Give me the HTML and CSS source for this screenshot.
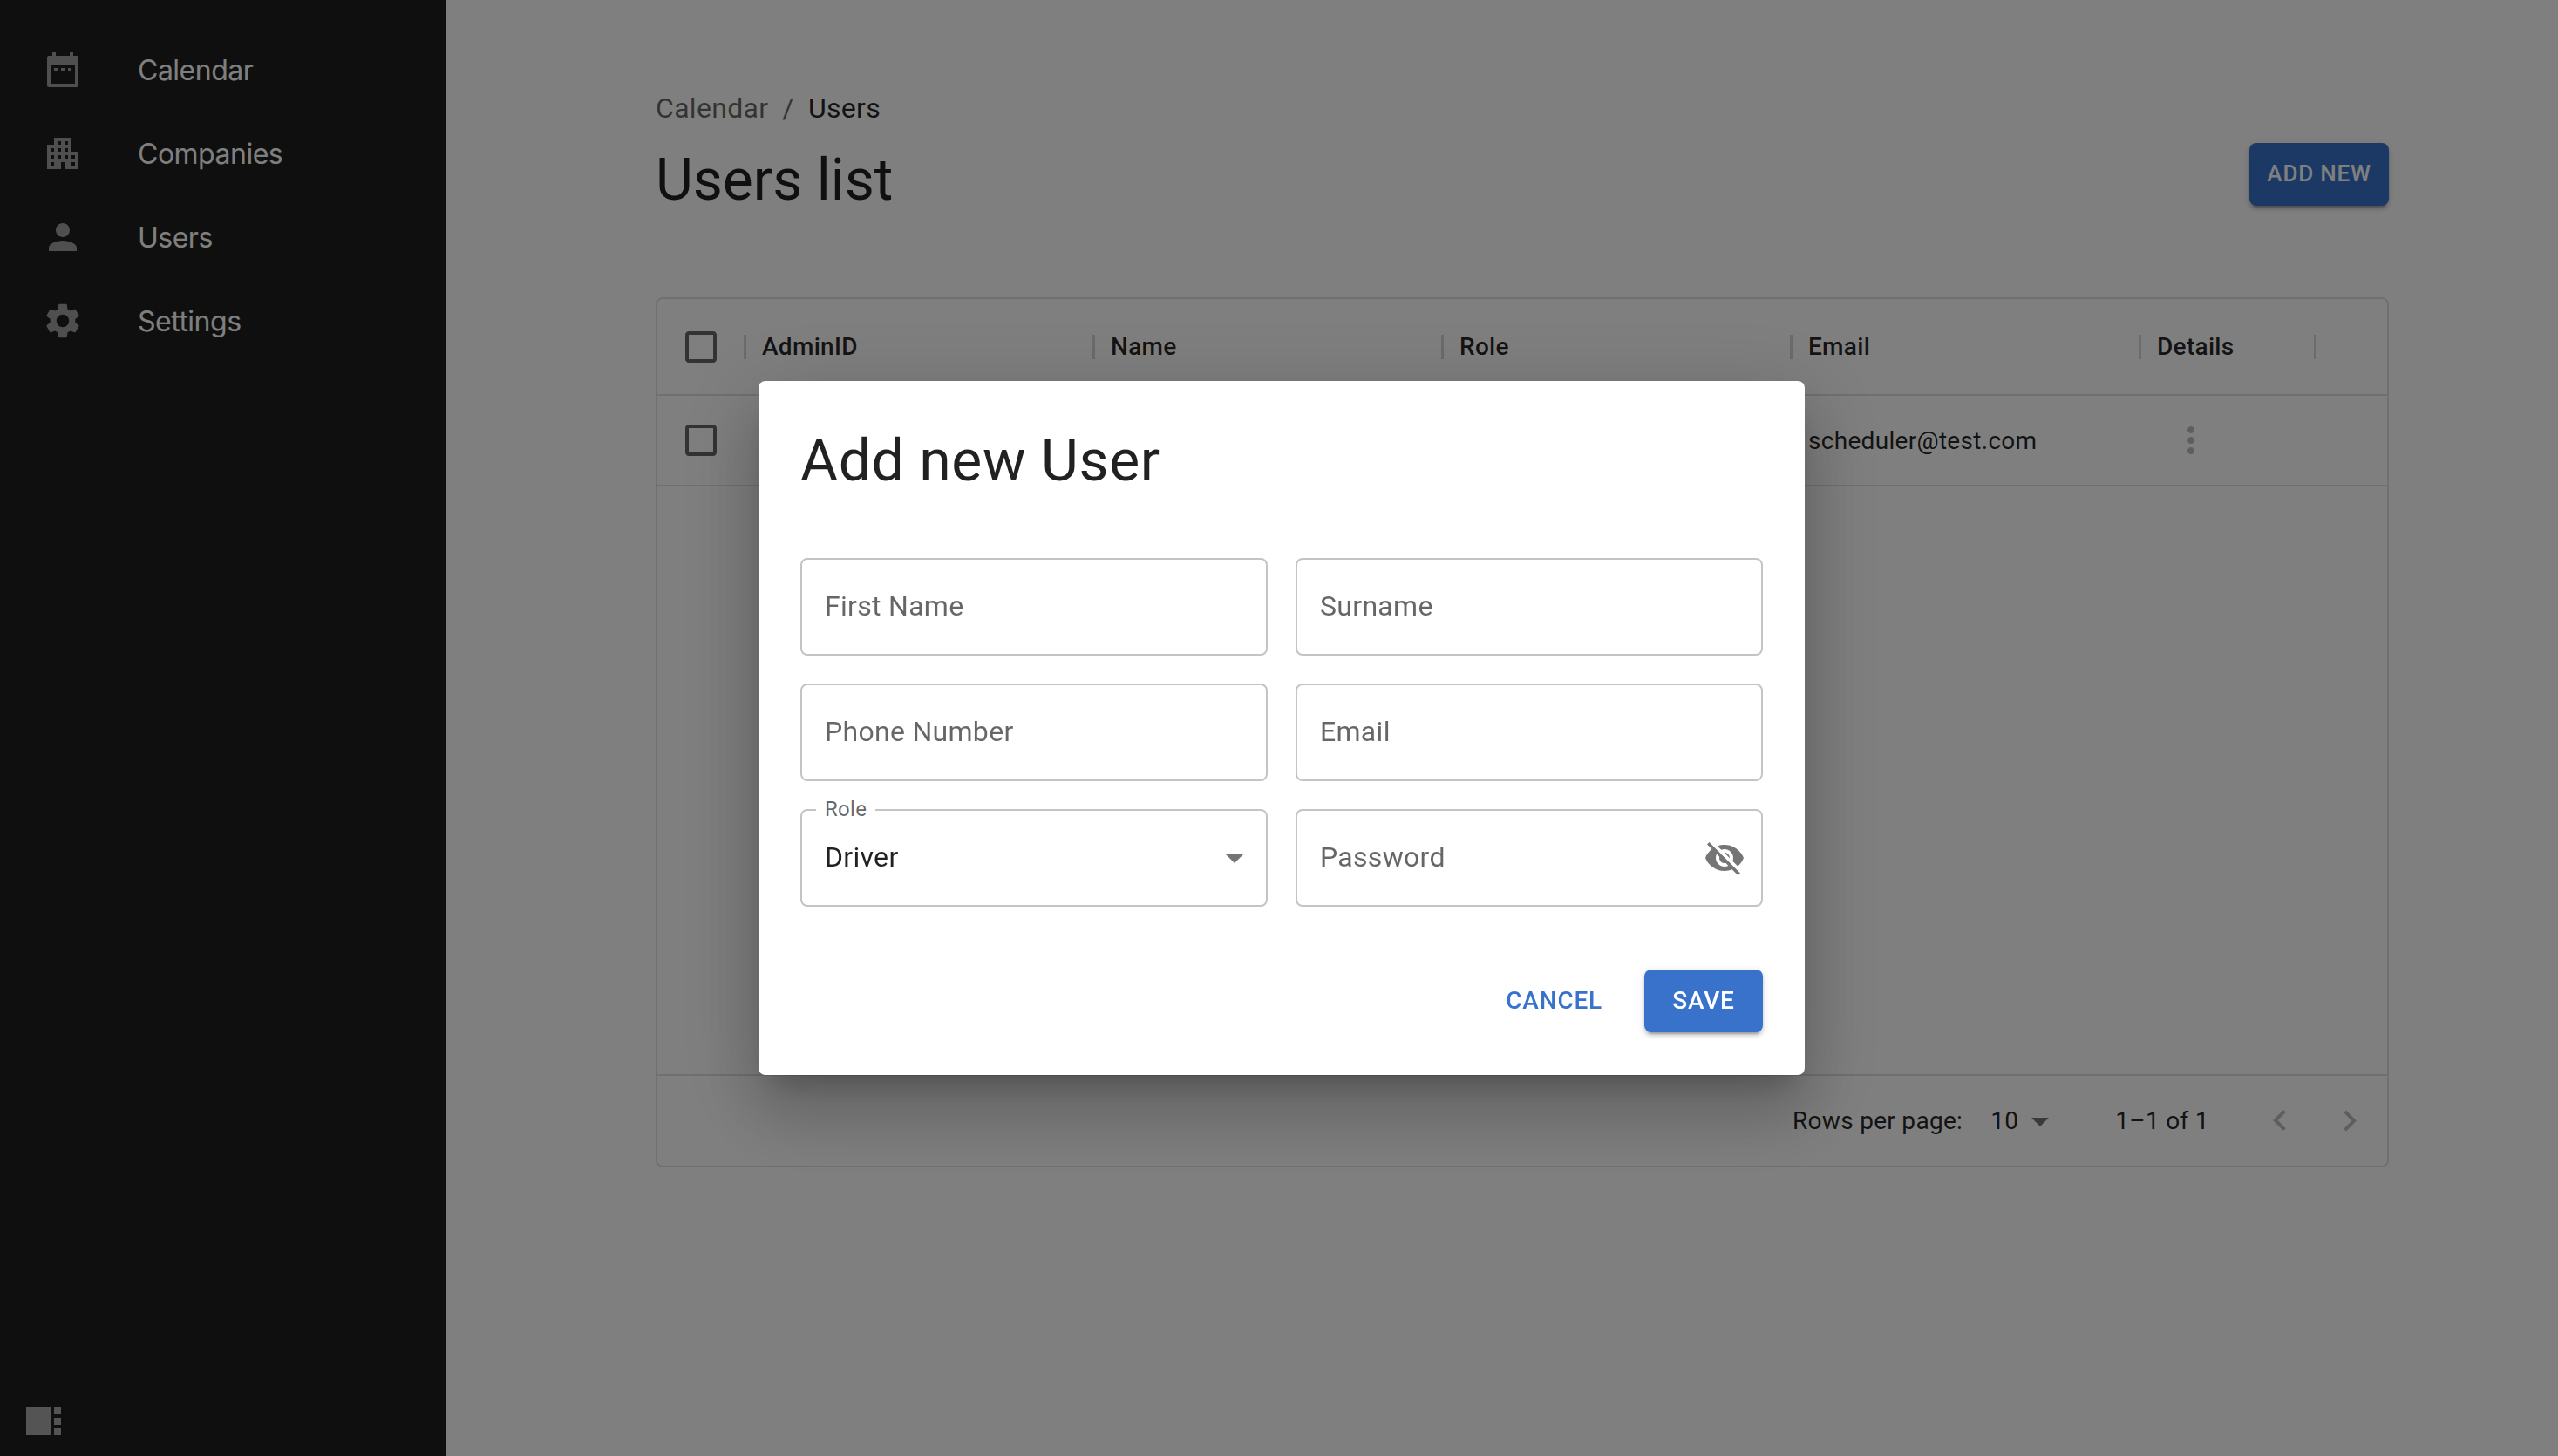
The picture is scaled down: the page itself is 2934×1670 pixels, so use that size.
FILE: index.html
```html
<!DOCTYPE html>
<html lang="en">
<head>
  <meta charset="UTF-8" />
  <title>Users list</title>
  <link rel="stylesheet" href="styles.css">
</head>
<body>

  <div class="page">
    <!-- Sidebar -->
    <aside class="sidebar">
      <nav class="nav">
        <a class="nav-item">
          <svg class="icon" viewBox="0 0 24 24"><path fill-rule="evenodd" d="M6 2h2v2h8V2h2v2h2c.6 0 1 .4 1 1v16c0 .6-.4 1-1 1H4c-.6 0-1-.4-1-1V5c0-.6.4-1 1-1h2V2zM5 9v11h14V9H5zm2 2h2v2H7v-2zm4 0h2v2h-2v-2zm4 0h2v2h-2v-2z"/></svg>
          <span>Calendar</span>
        </a>
        <a class="nav-item">
          <svg class="icon" viewBox="0 0 24 24"><path d="M17 11V3H7v4H3v14h8v-4h2v4h8V11h-4zM7 19H5v-2h2v2zm0-4H5v-2h2v2zm0-4H5V9h2v2zm4 4H9v-2h2v2zm0-4H9V9h2v2zm0-4H9V5h2v2zm4 8h-2v-2h2v2zm0-4h-2V9h2v2zm0-4h-2V5h2v2zm4 12h-2v-2h2v2zm0-4h-2v-2h2v2z"/></svg>
          <span>Companies</span>
        </a>
        <a class="nav-item">
          <svg class="icon" viewBox="0 0 24 24"><path d="M12 12c2.21 0 4-1.79 4-4s-1.79-4-4-4-4 1.79-4 4 1.79 4 4 4zm0 2c-2.67 0-8 1.34-8 4v2h16v-2c0-2.66-5.33-4-8-4z"/></svg>
          <span>Users</span>
        </a>
        <a class="nav-item">
          <svg class="icon" viewBox="0 0 24 24"><path d="M19.14 12.94c.04-.3.06-.61.06-.94 0-.32-.02-.64-.07-.94l2.03-1.58c.18-.14.23-.41.12-.61l-1.92-3.32c-.12-.22-.37-.29-.59-.22l-2.39.96c-.5-.38-1.03-.7-1.62-.94l-.36-2.54c-.04-.24-.24-.41-.48-.41h-3.84c-.24 0-.43.17-.47.41l-.36 2.54c-.59.24-1.13.57-1.62.94l-2.39-.96c-.22-.08-.47 0-.59.22L2.74 8.87c-.12.21-.08.47.12.61l2.03 1.58c-.05.3-.09.63-.09.94s.02.64.07.94l-2.03 1.58c-.18.14-.23.41-.12.61l1.92 3.32c.12.22.37.29.59.22l2.39-.96c.5.38 1.03.7 1.62.94l.36 2.54c.05.24.24.41.48.41h3.84c.24 0 .44-.17.47-.41l.36-2.54c.59-.24 1.13-.56 1.62-.94l2.39.96c.22.08.47 0 .59-.22l1.92-3.32c.12-.22.07-.47-.12-.61l-2.01-1.58zM12 15.6c-1.98 0-3.6-1.62-3.6-3.6s1.62-3.6 3.6-3.6 3.6 1.62 3.6 3.6-1.62 3.6-3.6 3.6z"/></svg>
          <span>Settings</span>
        </a>
      </nav>
      <div class="collapse">
        <div class="collapse-big"></div>
        <div class="collapse-dots"><i></i><i></i><i></i></div>
      </div>
    </aside>

    <!-- Main content -->
    <main class="content">
      <div class="breadcrumb">
        <span>Calendar</span>
        <span class="breadcrumb-sep">/</span>
        <span class="breadcrumb-current">Users</span>
      </div>
      <div class="title-row">
        <h1 class="page-title">Users list</h1>
        <button class="btn btn-primary btn-add">ADD NEW</button>
      </div>

      <div class="table">
        <div class="table-row table-head">
          <div class="cell-check">
            <svg class="icon check" viewBox="0 0 24 24"><path d="M19 5v14H5V5h14m0-2H5c-1.1 0-2 .9-2 2v14c0 1.1.9 2 2 2h14c1.1 0 2-.9 2-2V5c0-1.1-.9-2-2-2z"/></svg>
          </div>
          <div class="cell head-cell">AdminID</div>
          <div class="cell head-cell">Name</div>
          <div class="cell head-cell">Role</div>
          <div class="cell head-cell">Email</div>
          <div class="cell head-cell">Details</div>
          <div class="cell head-cell"></div>
        </div>
        <div class="table-row table-data">
          <div class="cell-check">
            <svg class="icon check" viewBox="0 0 24 24"><path d="M19 5v14H5V5h14m0-2H5c-1.1 0-2 .9-2 2v14c0 1.1.9 2 2 2h14c1.1 0 2-.9 2-2V5c0-1.1-.9-2-2-2z"/></svg>
          </div>
          <div class="cell"></div>
          <div class="cell"></div>
          <div class="cell"></div>
          <div class="cell">scheduler@test.com</div>
          <div class="cell cell-menu">
            <svg class="icon kebab" viewBox="0 0 24 24"><path d="M12 8c1.1 0 2-.9 2-2s-.9-2-2-2-2 .9-2 2 .9 2 2 2zm0 2c-1.1 0-2 .9-2 2s.9 2 2 2 2-.9 2-2-.9-2-2-2zm0 6c-1.1 0-2 .9-2 2s.9 2 2 2 2-.9 2-2-.9-2-2-2z"/></svg>
          </div>
        </div>
        <div class="table-body"></div>
        <div class="table-footer">
          <span>Rows per page:</span>
          <span class="rows-select">10
            <svg class="icon rows-arrow" viewBox="0 0 24 24"><path d="M7 10l5 5 5-5z"/></svg>
          </span>
          <span class="rows-count">1–1 of 1</span>
          <svg class="icon pager pager-prev" viewBox="0 0 24 24"><path d="M15.41 16.09l-4.58-4.59 4.58-4.59L14 5.5l-6 6 6 6z"/></svg>
          <svg class="icon pager pager-next" viewBox="0 0 24 24"><path d="M8.59 16.34l4.58-4.59-4.58-4.59L10 5.75l6 6-6 6z"/></svg>
        </div>
      </div>
    </main>
  </div>

  <!-- Add user dialog -->
  <div class="backdrop">
    <div class="dialog">
      <h2 class="dialog-title">Add new User</h2>
      <div class="form-grid">
        <div class="field"><span class="placeholder">First Name</span></div>
        <div class="field"><span class="placeholder">Surname</span></div>
        <div class="field"><span class="placeholder">Phone Number</span></div>
        <div class="field"><span class="placeholder">Email</span></div>
        <div class="field field-select">
          <span class="field-label">Role</span>
          <span class="field-value">Driver</span>
          <svg class="icon select-arrow" viewBox="0 0 24 24"><path d="M7 10l5 5 5-5z"/></svg>
        </div>
        <div class="field field-password">
          <span class="placeholder">Password</span>
          <svg class="icon eye" viewBox="0 0 24 24"><path d="M12 7c2.76 0 5 2.24 5 5 0 .65-.13 1.26-.36 1.83l2.92 2.92c1.51-1.26 2.7-2.89 3.43-4.75-1.73-4.39-6-7.5-11-7.5-1.4 0-2.74.25-3.98.7l2.16 2.16C10.74 7.13 11.35 7 12 7zM2 4.27l2.28 2.28.46.46C3.08 8.3 1.78 10.02 1 12c1.73 4.39 6 7.5 11 7.5 1.55 0 3.03-.3 4.38-.84l.42.42L19.73 22 21 20.73 3.27 3 2 4.27zM7.53 9.8l1.55 1.55c-.05.21-.08.43-.08.65 0 1.66 1.34 3 3 3 .22 0 .44-.03.65-.08l1.55 1.55c-.67.33-1.41.53-2.2.53-2.76 0-5-2.24-5-5 0-.79.2-1.53.53-2.2zm4.31-.78l3.15 3.15.02-.16c0-1.66-1.34-3-3-3l-.17.01z"/></svg>
        </div>
      </div>
      <div class="dialog-actions">
        <button class="btn btn-text">CANCEL</button>
        <button class="btn btn-primary btn-save">SAVE</button>
      </div>
    </div>
  </div>

</body>
</html>
```

FILE: styles.css
```css
* { box-sizing: border-box; margin: 0; padding: 0; }

body {
  font-family: 'Roboto', sans-serif;
  background: #fff;
  color: rgba(0, 0, 0, 0.87);
  height: 1670px;
  overflow: hidden;
}

.page {
  display: flex;
  height: 100%;
}

.icon {
  width: 48px;
  height: 48px;
  flex-shrink: 0;
  fill: currentColor;
  display: block;
}

/* Sidebar */
.sidebar {
  width: 512px;
  flex-shrink: 0;
  background: #1e1e1e;
  display: flex;
  flex-direction: column;
  justify-content: space-between;
}

.nav {
  padding-top: 32px;
}

.nav-item {
  display: flex;
  align-items: center;
  height: 96px;
  padding-left: 48px;
  gap: 62px;
  color: #fff;
  font-family: 'Inter', sans-serif;
  font-size: 32px;
  letter-spacing: -0.5px;
}

.nav-item .icon {
  color: #9e9e9e;
}

.collapse {
  display: flex;
  gap: 4px;
  padding: 0 0 24px 30px;
}

.collapse-big {
  width: 28px;
  height: 32px;
  background: #a8a8a8;
}

.collapse-dots {
  display: flex;
  flex-direction: column;
  justify-content: space-between;
}

.collapse-dots i {
  display: block;
  width: 8px;
  height: 8px;
  background: #a8a8a8;
}

/* Main content */
.content {
  flex: 1;
  padding: 100px 194px 0 240px;
}

.breadcrumb {
  display: flex;
  gap: 16px;
  font-size: 32px;
  line-height: 48px;
  letter-spacing: 0.3px;
  color: rgba(0, 0, 0, 0.6);
}

.breadcrumb-current {
  color: rgba(0, 0, 0, 0.87);
}

.title-row {
  display: flex;
  justify-content: space-between;
  align-items: flex-start;
  height: 193px;
}

.page-title {
  font-size: 66px;
  font-weight: 400;
  line-height: 80px;
  margin-top: 19px;
}

.btn {
  border: none;
  font-family: 'Roboto', sans-serif;
  font-size: 28px;
  font-weight: 500;
  letter-spacing: 0.8px;
  border-radius: 8px;
  height: 72px;
  padding-bottom: 2px;
  cursor: pointer;
}

.btn-primary {
  background: #3872cb;
  color: #fff;
  box-shadow: 0 6px 2px -4px rgba(0, 0, 0, 0.2), 0 4px 4px 0 rgba(0, 0, 0, 0.14), 0 2px 10px 0 rgba(0, 0, 0, 0.12);
}

.btn-add {
  width: 160px;
  margin-top: 16px;
  font-size: 26px;
}

.table {
  height: 998px;
  border: 2px solid #e0e0e0;
  border-radius: 8px;
  display: flex;
  flex-direction: column;
}

.table-row {
  display: grid;
  grid-template-columns: 99px 400px 400px 400px 400px 201px 1fr;
  align-items: center;
  border-bottom: 2px solid #e0e0e0;
  font-size: 28px;
  letter-spacing: 0.3px;
}

.table-head {
  height: 111px;
  font-weight: 500;
}

.table-data {
  height: 104px;
}

.cell-check {
  padding-left: 26px;
  color: rgba(0, 0, 0, 0.6);
}

.cell {
  padding-left: 21px;
}

.head-cell {
  height: 28px;
  line-height: 28px;
  border-left: 3px solid #d6d6d6;
  padding-left: 18px;
}

.cell-menu {
  padding-left: 36px;
}

.kebab {
  color: rgba(0, 0, 0, 0.26);
}

.table-body {
  flex: 1;
}

.table-footer {
  height: 105px;
  border-top: 2px solid #e0e0e0;
  display: flex;
  align-items: center;
  font-size: 28px;
  letter-spacing: 0.3px;
  padding-left: 1302px;
}

.rows-select {
  display: flex;
  align-items: center;
  margin-left: 32px;
}

.rows-arrow {
  color: rgba(0, 0, 0, 0.54);
  margin-left: 1px;
}

.rows-count {
  margin-left: 62px;
  width: 165px;
}

.pager {
  color: rgba(0, 0, 0, 0.26);
}

.pager-next {
  margin-left: 32px;
}

/* Dialog */
.backdrop {
  position: fixed;
  inset: 0;
  background: rgba(0, 0, 0, 0.5);
  display: flex;
  align-items: center;
  justify-content: center;
}

.dialog {
  width: 1200px;
  height: 796px;
  margin-left: 6px;
  background: #fff;
  border-radius: 8px;
  padding: 48px;
  display: flex;
  flex-direction: column;
  box-shadow: 0 22px 30px -14px rgba(0, 0, 0, 0.2), 0 48px 76px 6px rgba(0, 0, 0, 0.14), 0 18px 92px 16px rgba(0, 0, 0, 0.12);
}

.dialog-title {
  font-size: 66px;
  font-weight: 400;
  line-height: 80px;
  letter-spacing: 0.6px;
  color: rgba(0, 0, 0, 0.87);
  margin-top: 4px;
}

.form-grid {
  display: grid;
  grid-template-columns: 536px 536px;
  grid-auto-rows: 112px;
  gap: 32px;
  margin-top: 71px;
}

.field {
  position: relative;
  display: flex;
  align-items: center;
  justify-content: space-between;
  border: 2px solid #c4c4c4;
  border-radius: 8px;
  padding: 0 26px 2px;
  font-size: 32px;
  letter-spacing: 0.3px;
}

.placeholder {
  color: rgba(0, 0, 0, 0.6);
}

.field-label {
  position: absolute;
  left: 16px;
  top: -17px;
  background: #fff;
  padding: 0 10px;
  font-size: 24px;
  line-height: 30px;
  color: rgba(0, 0, 0, 0.6);
}

.select-arrow {
  color: rgba(0, 0, 0, 0.54);
  margin: 0 -14px -2px 0;
}

.eye {
  color: rgba(0, 0, 0, 0.54);
  margin: 0 -8px -2px 0;
}

.dialog-actions {
  display: flex;
  justify-content: flex-end;
  align-items: center;
  gap: 48px;
  margin-top: 72px;
}

.btn-text {
  background: none;
  color: #3872cb;
}

.btn-save {
  width: 136px;
}
```
